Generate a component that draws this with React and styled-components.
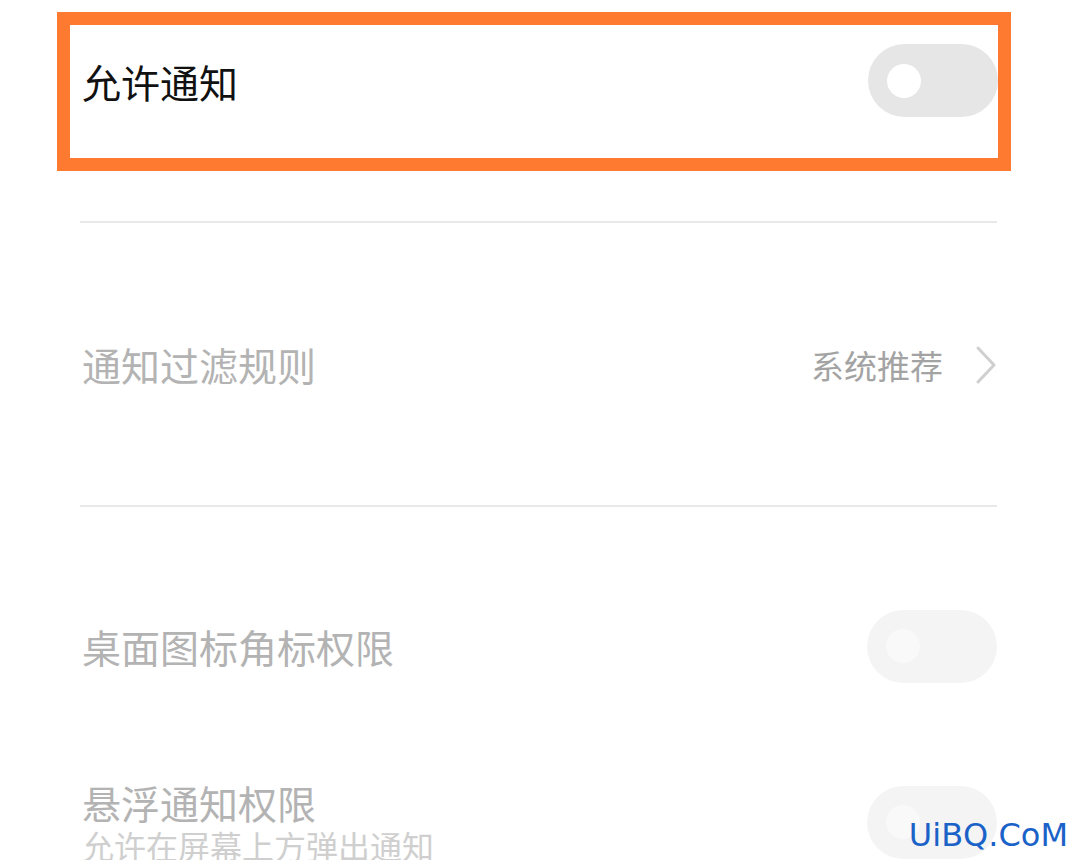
import React from "react";
import styled, { createGlobalStyle } from "styled-components";

const GlobalStyle = createGlobalStyle`
  html, body {
    margin: 0;
    padding: 0;
    background: #fff;
  }
  body {
    font-family: "Noto Sans CJK SC", "Noto Sans", sans-serif;
  }
`;

const Page = styled.div`
  position: relative;
  width: 1080px;
  height: 860px;
  overflow: hidden;
  background: #fff;
  padding-top: 12px;
  box-sizing: border-box;
`;

const Highlight = styled.div`
  box-sizing: border-box;
  width: 954px;
  height: 159px;
  margin-left: 57px;
  border: 13px solid #fe7a30;
  padding: 0 0 22px 12px;
  display: flex;
  align-items: center;
  justify-content: space-between;
`;

const List = styled.div`
  margin: 50px 83px 0 80px;
`;

const Divider = styled.div`
  height: 2px;
  background: #e9e9e9;
`;

const Row = styled.div`
  box-sizing: border-box;
  height: ${(p) => p.h}px;
  padding: ${(p) => p.pt || 0}px 0 0 2px;
  display: flex;
  align-items: center;
  justify-content: space-between;
`;

const TextBlock = styled.div`
  display: flex;
  flex-direction: column;
`;

const Title = styled.div`
  font-size: 39px;
  line-height: 46px;
  color: ${(p) => (p.dark ? "#111" : "#b3b3b3")};
  white-space: nowrap;
`;

const Sub = styled.div`
  font-size: 32px;
  line-height: 40px;
  color: #cfcfcf;
  white-space: nowrap;
`;

const Value = styled.div`
  display: flex;
  align-items: center;
  gap: 32px;
  font-size: 33px;
  color: #a3a3a3;
  padding-top: 2px;
`;

const Toggle = styled.div`
  position: relative;
  width: 130px;
  height: 73px;
  border-radius: 37px;
  background: ${(p) => (p.faint ? "#f4f4f4" : "#e6e6e6")};
  flex-shrink: 0;
`;

const Knob = styled.div`
  position: absolute;
  left: 19px;
  top: 50%;
  width: 34px;
  height: 34px;
  margin-top: -17px;
  border-radius: 50%;
  background: ${(p) => (p.faint ? "#f9f9f9" : "#fff")};
`;

const Watermark = styled.div`
  position: absolute;
  right: 12px;
  bottom: 6px;
  font-family: "DejaVu Sans", "Liberation Sans", sans-serif;
  font-size: 32px;
  color: #1a62c8;
`;

const Chevron = () => (
  <svg width="22" height="40" viewBox="0 0 22 40">
    <polyline
      points="3,3 19,20 3,37"
      fill="none"
      stroke="#cfcfcf"
      strokeWidth="3"
      strokeLinecap="round"
      strokeLinejoin="round"
    />
  </svg>
);

const App = () => {
  return (
    <Page>
      <GlobalStyle />
      <Highlight>
        <Title dark>允许通知</Title>
        <Toggle>
          <Knob />
        </Toggle>
      </Highlight>
      <List>
        <Divider />
        <Row h={282}>
          <Title>通知过滤规则</Title>
          <Value>
            系统推荐
            <Chevron />
          </Value>
        </Row>
        <Divider />
        <Row h={270} pt={8}>
          <Title>桌面图标角标权限</Title>
          <Toggle faint>
            <Knob faint />
          </Toggle>
        </Row>
        <Row h={90}>
          <TextBlock>
            <Title>悬浮通知权限</Title>
            <Sub>允许在屏幕上方弹出通知</Sub>
          </TextBlock>
          <Toggle faint>
            <Knob faint />
          </Toggle>
        </Row>
      </List>
      <Watermark>UiBQ.CoM</Watermark>
    </Page>
  );
};

export default App;
